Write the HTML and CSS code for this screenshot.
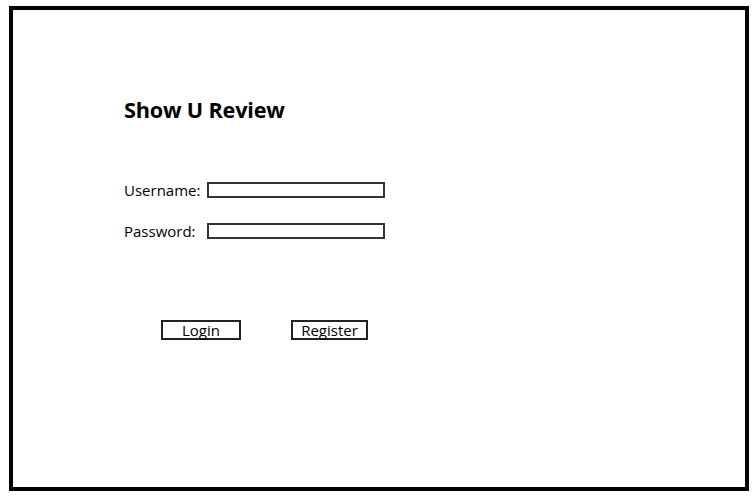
FILE: index.html
```html
<!DOCTYPE html>
<html>
<head>
<meta charset="utf-8">
<link rel="stylesheet" href="styles.css">
</head>
<body>
<div class="frame">
  <h1 class="title">Show U Review</h1>
  <div class="form">
    <div class="row">
      <span class="label">Username:</span>
      <span class="field"></span>
    </div>
    <div class="row">
      <span class="label">Password:</span>
      <span class="field"></span>
    </div>
  </div>
  <div class="actions">
    <span class="btn btn-login">Login</span>
    <span class="btn btn-register">Register</span>
  </div>
</div>
</body>
</html>
```
FILE: styles.css
```css
html, body {
  margin: 0;
  padding: 0;
  background: #fff;
}
body {
  font-family: "Open Sans", "Noto Sans", sans-serif;
  color: #000;
}
.frame {
  box-sizing: border-box;
  margin: 6px 0 0 9px;
  width: 740px;
  height: 485px;
  border: 4px solid #000;
  padding: 0 0 0 111px;
}
.title {
  margin: 84px 0 0 0;
  font-size: 21.7px;
  font-weight: 700;
  line-height: 32px;
  letter-spacing: -0.2px;
}
.form {
  margin-top: 56px;
  display: flex;
  flex-direction: column;
  gap: 25px;
}
.row {
  display: flex;
  align-items: center;
  height: 16px;
}
.label {
  width: 83px;
  font-size: 15px;
  line-height: 16px;
}
.field {
  box-sizing: border-box;
  width: 178px;
  height: 16px;
  border: 2px solid #333;
}
.actions {
  margin: 81px 0 0 37px;
  display: flex;
  gap: 50px;
}
.btn {
  box-sizing: border-box;
  height: 20px;
  border: 2px solid #222;
  font-size: 15px;
  line-height: 16px;
  text-align: center;
}
.btn-login { width: 80px; }
.btn-register { width: 77px; }
```
